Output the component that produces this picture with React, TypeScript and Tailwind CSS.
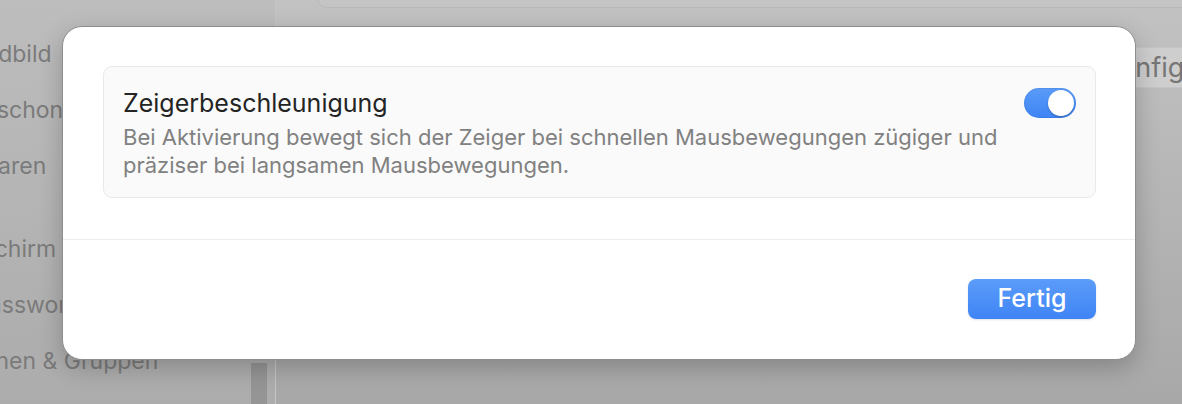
import { Fragment } from "react";

// Sidebar entries of the settings window behind the sheet (scrolled sideways)
const sidebarGroups: { label: string; offset: string }[][] = [
  [
    { label: "Hintergrundbild", offset: "ml-[-117px]" },
    { label: "Bildschirmschoner", offset: "ml-[-117px]" },
    { label: "Energie sparen", offset: "ml-[-117px]" },
  ],
  [
    { label: "Sperrbildschirm", offset: "ml-[-117px]" },
    { label: "Touch ID & Passwort", offset: "ml-[-150px]" },
    { label: "Benutzer:innen & Gruppen", offset: "ml-[-128px]" },
  ],
];

function Toggle({ on }: { on: boolean }) {
  return (
    <div
      className={
        on
          ? "flex h-[30px] w-[52px] shrink-0 items-center justify-end rounded-full bg-linear-to-b from-[#5a9bf8] to-[#3e84f5] p-[2px] shadow-[inset_0_0_0_1px_rgba(0,0,0,0.06)]"
          : "flex h-[30px] w-[52px] shrink-0 items-center justify-start rounded-full bg-[#e3e3e3] p-[2px]"
      }
    >
      <div className="h-[26px] w-[26px] rounded-full bg-white shadow-[0_1px_2px_rgba(0,0,0,0.25)]" />
    </div>
  );
}

export default function App() {
  return (
    <div className="relative h-[404px] w-[1182px] overflow-hidden font-['Inter','Noto_Sans',sans-serif]">
      {/* dimmed window behind */}
      <div className="flex h-full w-full">
        <aside className="relative h-full w-[276px] shrink-0 overflow-hidden border-r border-[#c6c6c6] bg-linear-to-b from-[#bdbdbd] to-[#acacac]">
          <div className="flex flex-col pt-[26px]">
            {sidebarGroups.map((group, gi) => (
              <Fragment key={gi}>
                {gi > 0 && <div className="h-[27px]" />}
                {group.map((item) => (
                  <div
                    key={item.label}
                    className={`${item.offset} h-[56px] whitespace-nowrap text-[23px] leading-[56px] text-[#7b7b7b]`}
                  >
                    {item.label}
                  </div>
                ))}
              </Fragment>
            ))}
          </div>
          <div className="absolute right-[8px] top-[363px] h-[200px] w-[16px] bg-[#959595]" />
        </aside>

        <main className="flex flex-1 flex-col bg-linear-to-b from-[#c2c2c2] to-[#a8a8a8]">
          <div className="ml-[41px] mt-[-32px] h-[40px] w-[900px] rounded-[10px] border border-[#b8b8b8] bg-[#c4c4c4]" />
          <div className="mt-[39px] flex">
            <button className="ml-[813px] h-[41px] whitespace-nowrap rounded-[6px] border border-[#c4c4c4] bg-[#cecece] px-[12px] text-[27px] leading-[39px] text-[#767676]">
              Konfigurieren …
            </button>
          </div>
        </main>
      </div>

      {/* sheet */}
      <div className="absolute left-[62px] top-[26px] flex w-[1074px] flex-col rounded-[20px] border border-[#8d8d8d] bg-white shadow-[0_8px_24px_rgba(0,0,0,0.22)]">
        <div className="pb-[41px] pl-[40px] pr-[39px] pt-[39px]">
          <div className="flex items-start justify-between rounded-[9px] border border-[#e9e9e9] bg-[#fafafa] px-[19px] pb-[18px] pt-[21px]">
            <div>
              <div className="text-[25px] leading-[30px] text-[#242424]">Zeigerbeschleunigung</div>
              <p className="mt-[5px] whitespace-nowrap text-[22px] leading-[28px] text-[#818181]">
                Bei Aktivierung bewegt sich der Zeiger bei schnellen Mausbewegungen zügiger und
                <br />
                präziser bei langsamen Mausbewegungen.
              </p>
            </div>
            <Toggle on />
          </div>
        </div>
        <div className="h-[1px] bg-[#ededed]" />
        <div className="flex justify-end pb-[40px] pr-[39px] pt-[39px]">
          <button className="h-[40px] w-[128px] rounded-[8px] bg-linear-to-b from-[#5b9cf9] to-[#3f84f5] text-[25px] font-medium text-white shadow-[0_1px_2px_rgba(0,0,0,0.12)]">
            Fertig
          </button>
        </div>
      </div>
    </div>
  );
}
